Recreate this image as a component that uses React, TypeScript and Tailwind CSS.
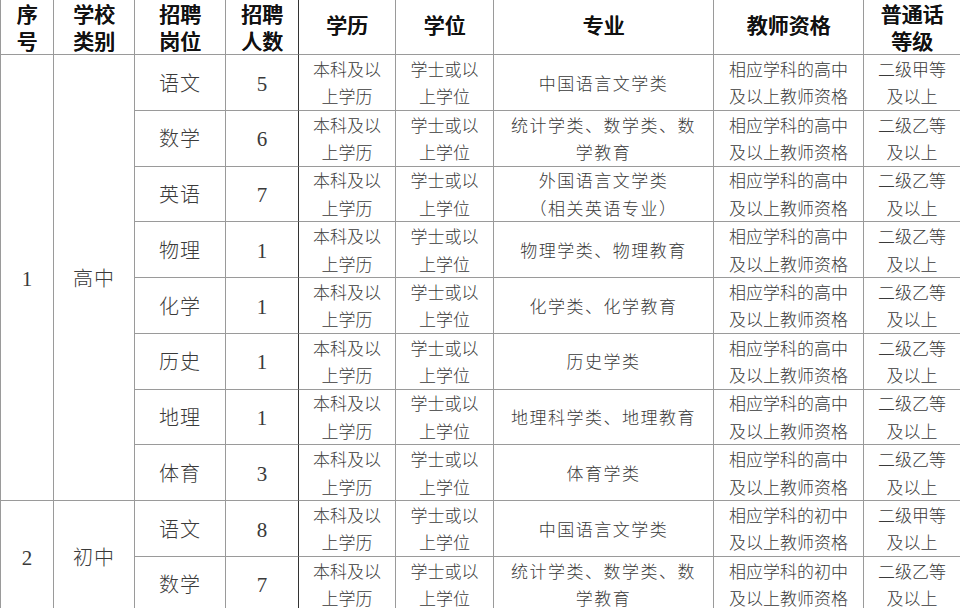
const cellBase =
  "flex items-center justify-center text-center border-b border-r border-[#9a9a9a]";
const headCell = `${cellBase} text-[21px] font-medium text-[#111] [text-shadow:0.4px_0_0_#111]`;

type Row = {
  post: string;
  count: string;
  major: string[];
  level: string;
  grade: string;
};

const highRows: Row[] = [
  { post: "语文", count: "5", major: ["中国语言文学类"], level: "高中", grade: "二级甲等" },
  { post: "数学", count: "6", major: ["统计学类、数学类、数", "学教育"], level: "高中", grade: "二级乙等" },
  { post: "英语", count: "7", major: ["外国语言文学类", "（相关英语专业）"], level: "高中", grade: "二级乙等" },
  { post: "物理", count: "1", major: ["物理学类、物理教育"], level: "高中", grade: "二级乙等" },
  { post: "化学", count: "1", major: ["化学类、化学教育"], level: "高中", grade: "二级乙等" },
  { post: "历史", count: "1", major: ["历史学类"], level: "高中", grade: "二级乙等" },
  { post: "地理", count: "1", major: ["地理科学类、地理教育"], level: "高中", grade: "二级乙等" },
  { post: "体育", count: "3", major: ["体育学类"], level: "高中", grade: "二级乙等" },
];

const midRows: Row[] = [
  { post: "语文", count: "8", major: ["中国语言文学类"], level: "初中", grade: "二级甲等" },
  { post: "数学", count: "7", major: ["统计学类、数学类、数", "学教育"], level: "初中", grade: "二级乙等" },
];

const Lines = ({ items }: { items: string[] }) => (
  <div className="mt-[4px] leading-[27.5px]">
    {items.map((t, i) => (
      <div key={i}>{t}</div>
    ))}
  </div>
);

const DataRow = ({ row }: { row: Row }) => (
  <>
    <div className={`${cellBase} text-[20px] tracking-[1px]`}>
      <Lines items={[row.post]} />
    </div>
    <div className={`${cellBase} border-r-[#333] text-[21px]`}>
      <Lines items={[row.count]} />
    </div>
    <div className={`${cellBase} text-[17px]`}>
      <Lines items={["本科及以", "上学历"]} />
    </div>
    <div className={`${cellBase} text-[17px]`}>
      <Lines items={["学士或以", "上学位"]} />
    </div>
    <div className={`${cellBase} text-[17px] tracking-[1.5px]`}>
      <Lines items={row.major} />
    </div>
    <div className={`${cellBase} text-[17px]`}>
      <Lines items={[`相应学科的${row.level}`, "及以上教师资格"]} />
    </div>
    <div className={`${cellBase} text-[17px]`}>
      <Lines items={[row.grade, "及以上"]} />
    </div>
  </>
);

const App = () => {
  return (
    <div className="w-[960px] h-[608px] overflow-hidden bg-white">
      <div className="grid grid-cols-[53px_81px_91px_73px_97px_98px_220px_150px_97px] grid-rows-[55px_repeat(10,55.75px)] border-l border-[#9a9a9a] font-['Liberation_Serif','Noto_Sans_CJK_SC',serif] text-[#3a3a3a] font-light">
        {/* header */}
        <div className={headCell}>
          <Lines items={["序", "号"]} />
        </div>
        <div className={headCell}>
          <Lines items={["学校", "类别"]} />
        </div>
        <div className={headCell}>
          <Lines items={["招聘", "岗位"]} />
        </div>
        <div className={`${headCell} border-r-[#333]`}>
          <Lines items={["招聘", "人数"]} />
        </div>
        <div className={headCell}>学历</div>
        <div className={headCell}>学位</div>
        <div className={headCell}>专业</div>
        <div className={headCell}>教师资格</div>
        <div className={headCell}>
          <Lines items={["普通话", "等级"]} />
        </div>

        {/* 高中 */}
        <div className={`${cellBase} row-span-8 text-[21px]`}>
          <Lines items={["1"]} />
        </div>
        <div className={`${cellBase} row-span-8 text-[20px] tracking-[1px]`}>
          <Lines items={["高中"]} />
        </div>
        {highRows.map((r, i) => (
          <DataRow key={`h${i}`} row={r} />
        ))}

        {/* 初中 */}
        <div className={`${cellBase} row-span-2 text-[21px]`}>
          <Lines items={["2"]} />
        </div>
        <div className={`${cellBase} row-span-2 text-[20px] tracking-[1px]`}>
          <Lines items={["初中"]} />
        </div>
        {midRows.map((r, i) => (
          <DataRow key={`m${i}`} row={r} />
        ))}
      </div>
    </div>
  );
};

export default App;
